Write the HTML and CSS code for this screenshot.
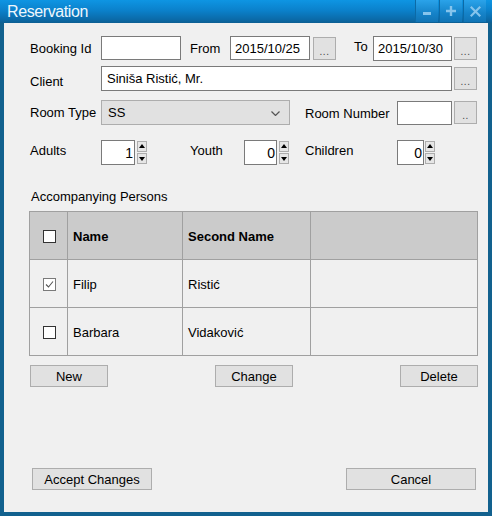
FILE: index.html
```html
<!DOCTYPE html>
<html>
<head>
<meta charset="utf-8">
<link rel="stylesheet" href="styles.css">
</head>
<body>
<div class="window">
  <div class="titlebar">
    <span class="title">Reservation</span>
    <div class="tb-buttons">
      <div class="tb-btn"><svg width="10" height="10" viewBox="0 0 10 10"><rect x="1" y="6" width="8" height="3" fill="#86c4ec"/></svg></div>
      <div class="tb-btn"><svg width="10" height="10" viewBox="0 0 10 10"><path d="M3.8 0h2.4v3.8H10v2.4H6.2V10H3.8V6.2H0V3.8h3.8z" fill="#86c4ec"/></svg></div>
      <div class="tb-btn"><svg width="11" height="11" viewBox="0 0 11 11"><path d="M1.5 0L5.5 4 9.5 0 11 1.5 7 5.5 11 9.5 9.5 11 5.5 7 1.5 11 0 9.5 4 5.5 0 1.5z" fill="#86c4ec"/></svg></div>
    </div>
  </div>
  <div class="client">
    <div class="row r1">
      <span class="lbl w71">Booking Id</span>
      <div class="input w80"></div>
      <span class="lbl from">From</span>
      <div class="input w80">2015/10/25</div>
      <div class="dots ml3">...</div>
      <span class="lbl to">To</span>
      <div class="input w79 h25">2015/10/30</div>
      <div class="dots ml2">...</div>
    </div>
    <div class="row r2">
      <span class="lbl w71 low">Client</span>
      <div class="input w351 h25">Siniša Ristić, Mr.</div>
      <div class="dots ml2">...</div>
    </div>
    <div class="row r3">
      <span class="lbl w71">Room Type</span>
      <div class="select">SS<svg class="chev" width="9" height="5" viewBox="0 0 9 5"><path d="M0.5 0.5L4.5 4.5 8.5 0.5" fill="none" stroke="#555" stroke-width="1.2"/></svg></div>
      <span class="lbl roomnum">Room Number</span>
      <div class="input w55"></div>
      <div class="dots ml2">..</div>
    </div>
    <div class="row r4">
      <span class="lbl w71">Adults</span>
      <div class="spin-in w34">1</div>
      <div class="arrows ml2"><div class="arr up"></div><div class="arr down"></div></div>
      <span class="lbl youth">Youth</span>
      <div class="spin-in w33">0</div>
      <div class="arrows ml2"><div class="arr up"></div><div class="arr down"></div></div>
      <span class="lbl children">Children</span>
      <div class="spin-in w27">0</div>
      <div class="arrows ml1"><div class="arr up"></div><div class="arr down"></div></div>
    </div>
    <div class="section">Accompanying Persons</div>
    <div class="grid">
      <div class="cell head center"><span class="cb"></span></div>
      <div class="cell head">Name</div>
      <div class="cell head">Second Name</div>
      <div class="cell head"></div>
      <div class="cell center"><span class="cb checked"><svg width="11" height="11" viewBox="0 0 11 11"><path d="M2 5.5L4.5 8 9 2.5" fill="none" stroke="#555" stroke-width="1.1"/></svg></span></div>
      <div class="cell">Filip</div>
      <div class="cell">Ristić</div>
      <div class="cell"></div>
      <div class="cell center"><span class="cb"></span></div>
      <div class="cell">Barbara</div>
      <div class="cell">Vidaković</div>
      <div class="cell"></div>
    </div>
    <div class="actions">
      <div class="btn w78">New</div>
      <div class="btn w78">Change</div>
      <div class="btn w78">Delete</div>
    </div>
    <div class="footer">
      <div class="btn accept">Accept Changes</div>
      <div class="btn cancel">Cancel</div>
    </div>
  </div>
</div>
</body>
</html>
```

FILE: styles.css
```css
* { box-sizing: border-box; }
html, body { margin: 0; padding: 0; }
body {
  width: 492px;
  height: 516px;
  overflow: hidden;
  font-family: "Liberation Sans", Arial, sans-serif;
  font-size: 13px;
  color: #000;
}
.window {
  width: 492px;
  height: 516px;
  background: #12618e;
  display: flex;
  flex-direction: column;
}
.titlebar {
  height: 23px;
  background: linear-gradient(#0e95e3 0%, #0b81cb 45%, #0b6aa8 85%, #0d5f92 100%);
  display: flex;
  align-items: flex-start;
  justify-content: space-between;
}
.title {
  color: #eef7fd;
  font-size: 16px;
  letter-spacing: -0.4px;
  margin-left: 7px;
  line-height: 22px;
  margin-top: 1px;
}
.tb-buttons {
  display: flex;
  gap: 1px;
  margin-right: 6px;
}
.tb-btn {
  width: 23px;
  height: 22px;
  background: linear-gradient(#2aa3ea, #1583c9 60%, #1174b5);
  border-left: 1px solid #0c6aa6;
  display: flex;
  align-items: center;
  justify-content: center;
}
.client {
  flex: 1;
  background: #f0f0f0;
  margin: 0 4px 4px 4px;
  padding: 12px 0 0 26px;
}
.row {
  display: flex;
  align-items: center;
}
.r1 { height: 26px; }
.r2 { height: 25px; margin-top: 5px; }
.r3 { height: 25px; margin-top: 9px; }
.r4 { height: 25px; margin-top: 15px; }
.lbl { white-space: nowrap; flex: none; }
.w71 { width: 71px; }
.low { padding-top: 6px; }
.from { margin-left: 9px; width: 40px; }
.to { margin-left: 18px; width: 19px; padding-bottom: 4px; }
.roomnum { margin-left: 15px; width: 92px; padding-top: 1px; }
.youth { margin-left: 43px; width: 54px; padding-bottom: 4px; }
.children { margin-left: 16px; width: 92px; padding-bottom: 4px; }
.r4 .w71 { padding-bottom: 4px; }
.input {
  flex: none;
  height: 24px;
  background: #fff;
  border: 1px solid #7a7a7a;
  padding: 0 4px;
  display: flex;
  align-items: center;
  white-space: nowrap;
}
.h25 { height: 25px; }
.w80 { width: 80px; }
.w79 { width: 79px; }
.w55 { width: 55px; }
.w351 { width: 351px; padding-left: 5px; }
.ml1 { margin-left: 1px; }
.ml2 { margin-left: 2px; }
.ml3 { margin-left: 3px; }
.dots {
  flex: none;
  width: 23px;
  height: 23px;
  background: #e1e1e1;
  border: 1px solid #adadad;
  color: #444;
  font-size: 10px;
  display: flex;
  align-items: flex-end;
  justify-content: center;
  padding-bottom: 2px;
  letter-spacing: 0.5px;
}
.select {
  flex: none;
  width: 189px;
  height: 25px;
  background: #e1e1e1;
  border: 1px solid #adadad;
  display: flex;
  align-items: center;
  justify-content: space-between;
  padding: 0 9px 0 6px;
}
.chev { margin-top: 1px; }
.spin-in {
  flex: none;
  height: 25px;
  background: #fff;
  border: 1px solid #7a7a7a;
  display: flex;
  align-items: center;
  justify-content: flex-end;
  padding-right: 1px;
  font-size: 14px;
}
.w34 { width: 34px; }
.w33 { width: 33px; }
.w27 { width: 27px; }
.arrows {
  flex: none;
  display: flex;
  flex-direction: column;
  gap: 1px;
}
.arr {
  width: 10px;
  height: 11px;
  background: #e6e6e6;
  border: 1px solid #adadad;
  position: relative;
}
.arr::after {
  content: "";
  position: absolute;
  left: 1px;
  width: 0;
  height: 0;
  border-left: 3px solid transparent;
  border-right: 3px solid transparent;
}
.up::after { top: 2px; border-bottom: 4px solid #000; }
.down::after { top: 3px; border-top: 4px solid #000; }
.section {
  margin-top: 23px;
  margin-left: 1px;
  height: 16px;
  line-height: 16px;
  padding-top: 1px;
}
.grid {
  margin-top: 7px;
  margin-left: -1px;
  width: 449px;
  display: grid;
  grid-template-columns: 38px 115px 128px 167px;
  grid-auto-rows: 48px;
  border-top: 1px solid #a0a0a0;
  border-left: 1px solid #a0a0a0;
}
.cell {
  border-right: 1px solid #a0a0a0;
  border-bottom: 1px solid #a0a0a0;
  display: flex;
  align-items: center;
  padding-left: 5px;
  padding-top: 2px;
  background: #f0f0f0;
}
.head { background: #cbcbcb; font-weight: bold; padding-top: 1px; }
.center { justify-content: center; padding-left: 0; }
.cb {
  width: 13px;
  height: 13px;
  background: #fff;
  border: 1px solid #333;
  display: flex;
  align-items: center;
  justify-content: center;
  margin-left: 2px;
}
.cb.checked { border-color: #7a7a7a; }
.actions {
  width: 448px;
  margin-top: 9px;
  display: flex;
  justify-content: space-between;
}
.btn {
  height: 22px;
  background: #e1e1e1;
  border: 1px solid #adadad;
  display: flex;
  align-items: center;
  justify-content: center;
  white-space: nowrap;
  padding-top: 1px;
}
.w78 { width: 78px; }
.footer {
  width: 448px;
  margin-top: 81px;
  display: flex;
  justify-content: space-between;
}
.accept { width: 120px; margin-left: 2px; }
.cancel { width: 130px; margin-right: 2px; }
```
